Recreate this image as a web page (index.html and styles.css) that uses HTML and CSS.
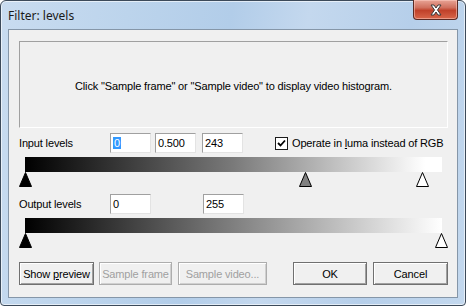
FILE: index.html
```html
<!DOCTYPE html>
<html>
<head>
    <meta charset="utf-8">
    <title>Filter: levels</title>
    <link rel="stylesheet" href="styles.css">
</head>
<body>
    <div class="window">
        <div class="titlebar">
            <span class="title">Filter: levels</span>
            <div class="close-btn">
                <svg width="18" height="12" viewBox="0 0 18 12">
                    <path d="M4 1 L7 1 L9 4 L11 1 L14 1 L10.5 6 L14 11 L11 11 L9 8 L7 11 L4 11 L7.5 6 Z" fill="#fff" stroke="#3a3a3a" stroke-width="1" stroke-linejoin="round"/>
                </svg>
            </div>
        </div>

        <div class="client">
            <div class="histogram">Click "Sample frame" or "Sample video" to display video histogram.</div>

            <div class="row">
                <span class="row-label">Input levels</span>
                <span class="edit edit-first"><span class="selected">0</span></span>
                <span class="edit edit-gap">0.500</span>
                <span class="edit edit-gap2">243</span>
                <label class="check">
                    <span class="check-box">
                        <svg width="9" height="9" viewBox="0 0 9 9"><path d="M1 4 L3.5 6.5 L8 1.5" fill="none" stroke="#000" stroke-width="1.8"/></svg>
                    </span>
                    <span>Operate in <u>l</u>uma instead of RGB</span>
                </label>
            </div>

            <div class="slider">
                <div class="gradient"></div>
                <div class="marks">
                    <svg class="mark" style="left: 0px" width="13" height="15" viewBox="0 0 13 15"><path d="M6.5 0.5 L12.5 14.5 L0.5 14.5 Z" fill="#000" stroke="#000"/></svg>
                    <svg class="mark" style="left: 280px" width="13" height="15" viewBox="0 0 13 15"><path d="M6.5 0.5 L12.5 14.5 L0.5 14.5 Z" fill="#808080" stroke="#000"/></svg>
                    <svg class="mark" style="left: 397px" width="13" height="15" viewBox="0 0 13 15"><path d="M6.5 0.5 L12.5 14.5 L0.5 14.5 Z" fill="#fff" stroke="#000"/></svg>
                </div>
            </div>

            <div class="row row-output">
                <span class="row-label">Output levels</span>
                <span class="edit edit-first">0</span>
                <span class="edit edit-far">255</span>
            </div>

            <div class="slider">
                <div class="gradient gradient-out"></div>
                <div class="marks">
                    <svg class="mark" style="left: 0px" width="13" height="15" viewBox="0 0 13 15"><path d="M6.5 0.5 L12.5 14.5 L0.5 14.5 Z" fill="#000" stroke="#000"/></svg>
                    <svg class="mark" style="left: 416px" width="13" height="15" viewBox="0 0 13 15"><path d="M6.5 0.5 L12.5 14.5 L0.5 14.5 Z" fill="#fff" stroke="#000"/></svg>
                </div>
            </div>

            <div class="buttons">
                <button class="btn btn-preview">Show <u>p</u>review</button>
                <button class="btn btn-frame" disabled>Sample frame</button>
                <button class="btn btn-video" disabled>Sample video...</button>
                <span class="spacer"></span>
                <button class="btn btn-ok">OK</button>
                <button class="btn btn-cancel">Cancel</button>
            </div>
        </div>
    </div>
</body>
</html>
```

FILE: styles.css
```css
* {
    margin: 0;
    padding: 0;
    box-sizing: border-box;
}
body {
    width: 466px;
    height: 306px;
    overflow: hidden;
    background: #fff;
    font-family: "Liberation Sans", Arial, sans-serif;
    font-size: 11px;
    letter-spacing: -0.15px;
    color: #000;
}
.window {
    width: 466px;
    height: 306px;
    border: 1px solid #3c4a5a;
    border-radius: 6px 6px 4px 4px;
    background: linear-gradient(100deg, #c9dcf0 0%, #bcd4ec 25%, #b2cde9 45%, #c4d8ee 60%, #b6cfea 80%, #c3d8ee 100%);
    padding: 0 7px 7px 7px;
    display: flex;
    flex-direction: column;
    box-shadow: inset 0 0 0 1px rgba(255, 255, 255, 0.6);
}
.titlebar {
    height: 28px;
    display: flex;
    align-items: flex-start;
    position: relative;
}
.title {
    font-family: "Noto Sans", "DejaVu Sans", sans-serif;
    font-size: 12px;
    letter-spacing: 0;
    margin-top: 6px;
    color: #1a1a1a;
}
.close-btn {
    position: absolute;
    top: -1px;
    right: 0;
    width: 45px;
    height: 20px;
    border: 1px solid #5a2a24;
    border-top: none;
    border-radius: 0 0 4px 4px;
    background: linear-gradient(#e8a496 0%, #d0705e 40%, #c0412a 55%, #d8664a 100%);
    box-shadow: inset 0 0 0 1px rgba(255, 210, 200, 0.5);
    display: flex;
    justify-content: center;
    align-items: center;
}
.client {
    flex: 1;
    background: #f0f0f0;
    border: 1px solid #8596a8;
    padding: 11px 9px 0 10px;
    display: flex;
    flex-direction: column;
}
.histogram {
    height: 87px;
    border: 1px solid;
    border-color: #a0a0a0 #fff #fff #a0a0a0;
    display: flex;
    justify-content: center;
    align-items: center;
    padding-top: 2px;
}
.row {
    margin-top: 5px;
    height: 20px;
    display: flex;
    align-items: center;
}
.row-output {
    margin-top: 7px;
}
.row-label {
    width: 91px;
}
.edit {
    width: 41px;
    height: 20px;
    background: #fff;
    border: 1px solid;
    border-color: #a0a0a0 #e3e3e3 #e3e3e3 #a0a0a0;
    padding: 2px 0 0 2px;
    line-height: 14px;
}
.edit-gap {
    margin-left: 4px;
}
.edit-gap2 {
    margin-left: 6px;
}
.edit-far {
    margin-left: 52px;
}
.selected {
    background: #3399ff;
    color: #fff;
    padding: 0 1px;
}
.check {
    margin-left: 32px;
    display: flex;
    align-items: center;
    gap: 4px;
}
.check-box {
    width: 13px;
    height: 13px;
    background: #fff;
    border: 1px solid #1c1c1c;
    display: flex;
    justify-content: center;
    align-items: center;
}
.slider {
    margin-top: 4px;
    padding: 0 6px;
    height: 30px;
}
.gradient {
    height: 15px;
    background: linear-gradient(to right, #000 0%, #7a7a7a 50%, #fff 96%);
}
.gradient-out {
    background: linear-gradient(to right, #000 0%, #fff 100%);
}
.marks {
    position: relative;
    height: 15px;
    margin-left: -6px;
}
.mark {
    position: absolute;
    top: 0;
    display: block;
}
.buttons {
    margin-top: 14px;
    display: flex;
    height: 23px;
}
.btn {
    height: 23px;
    font-family: "Liberation Sans", Arial, sans-serif;
    font-size: 11px;
    letter-spacing: -0.15px;
    color: #000;
    background: #f0f0f0;
    border: 1px solid #707070;
    box-shadow: inset 1px 1px 0 #fff, inset -1px -1px 0 #a0a0a0;
}
.btn:disabled {
    color: #a0a0a0;
    border-color: #adadad;
    box-shadow: inset 1px 1px 0 #fff, inset -1px -1px 0 #d0d0d0;
}
.btn-preview {
    width: 75px;
}
.btn-frame {
    width: 73px;
    margin-left: 5px;
}
.btn-video {
    width: 89px;
    margin-left: 6px;
}
.spacer {
    flex: 1;
}
.btn-ok {
    width: 74px;
}
.btn-cancel {
    width: 75px;
    margin-left: 6px;
}
```
